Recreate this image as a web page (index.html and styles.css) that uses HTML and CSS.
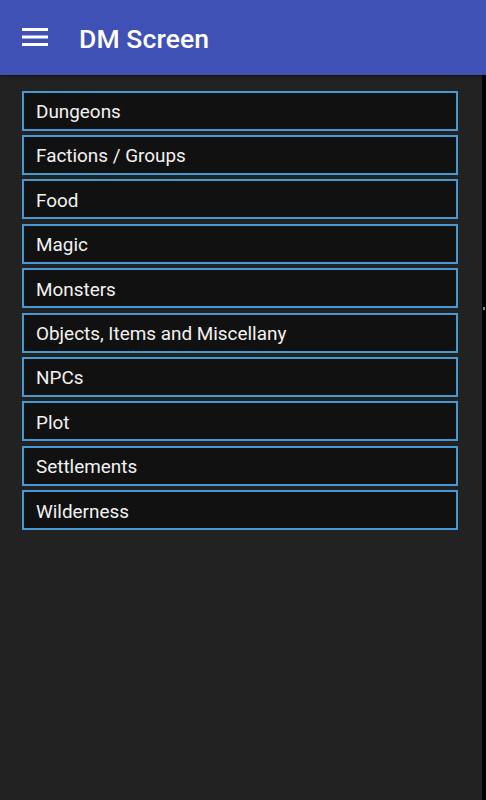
FILE: index.html
```html
<!DOCTYPE html>
<html>
<head>
<meta charset="utf-8">
<link rel="stylesheet" href="styles.css">
</head>
<body>
<header class="appbar">
  <svg class="menu-icon" width="26" height="20" viewBox="0 0 26 20">
    <rect x="0" y="1" width="26" height="3" fill="#fff"/>
    <rect x="0" y="8.5" width="26" height="3" fill="#fff"/>
    <rect x="0" y="16" width="26" height="3" fill="#fff"/>
  </svg>
  <h1 class="title">DM Screen</h1>
</header>
<div class="main">
  <ul class="list">
    <li class="item">Dungeons</li>
    <li class="item">Factions / Groups</li>
    <li class="item">Food</li>
    <li class="item">Magic</li>
    <li class="item">Monsters</li>
    <li class="item">Objects, Items and Miscellany</li>
    <li class="item">NPCs</li>
    <li class="item">Plot</li>
    <li class="item">Settlements</li>
    <li class="item">Wilderness</li>
  </ul>
  <div class="edge"><span class="edge-mark"></span></div>
</div>
</body>
</html>
```
FILE: styles.css
```css
html, body {
  margin: 0;
  padding: 0;
  height: 100%;
}
body {
  background: #222222;
  font-family: Roboto, "Noto Sans", sans-serif;
  display: flex;
  flex-direction: column;
  overflow: hidden;
}
.appbar {
  height: 75px;
  flex: 0 0 75px;
  background: #3f51b5;
  display: flex;
  align-items: center;
  padding-left: 22px;
  box-shadow: 0 1px 3px rgba(0,0,0,0.5);
  position: relative;
  z-index: 1;
}
.menu-icon {
  display: block;
  margin-top: -1px;
}
.title {
  margin: 2px 0 0 31px;
  color: #ffffff;
  font-size: 26.5px;
  font-weight: 500;
  letter-spacing: 0.1px;
}
.main {
  flex: 1;
  display: flex;
}
.list {
  list-style: none;
  margin: 15.6px 0 0 22px;
  padding: 0;
  width: 436px;
  display: flex;
  flex-direction: column;
  gap: 4.4px;
}
.item {
  height: 40px;
  box-sizing: border-box;
  border: 2px solid #4699d3;
  background: #111111;
  color: #f2f2f2;
  font-size: 18.9px;
  display: flex;
  align-items: center;
  padding-left: 12px;
  padding-top: 2px;
}
.edge {
  margin-left: auto;
  width: 4px;
  background: #000;
  position: relative;
}
.edge-mark {
  position: absolute;
  left: 1px;
  top: 232px;
  width: 2px;
  height: 3px;
  background: #888;
}
```
